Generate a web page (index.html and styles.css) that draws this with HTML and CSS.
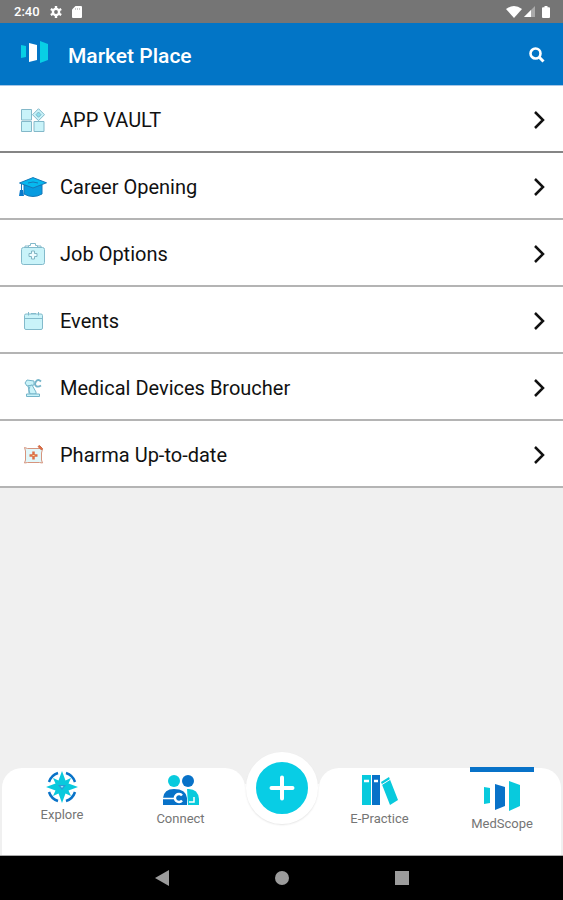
FILE: index.html
```html
<!DOCTYPE html>
<html lang="en">
<head>
<meta charset="utf-8">
<meta name="viewport" content="width=device-width, initial-scale=1">
<title>Market Place</title>
<link rel="stylesheet" href="styles.css">
</head>
<body>
<div class="status">
  <span class="time">2:40</span>
  <svg width="12" height="12" viewBox="0 0 12 12"><circle cx="6" cy="6" r="3.1" fill="none" stroke="#fff" stroke-width="2.4"/><path d="M6 0v12M.8 3l10.4 6M.8 9l10.4-6" stroke="#fff" stroke-width="2.4"/><circle cx="6" cy="6" r="1.9" fill="#757575"/></svg>
  <svg class="card" width="10" height="12" viewBox="0 0 10 12"><path d="M3.5 0H9q1 0 1 1v10q0 1-1 1H1q-1 0-1-1V3.6z" fill="#fff"/><path d="M3.5 2v2M5.5 2v2M7.5 2v2" stroke="#ccc"/></svg>
  <span class="signals">
    <svg width="16" height="12" viewBox="0 0 16 12"><path d="M0 3Q8-3 16 3L8 12z" fill="#fff"/></svg>
    <svg width="11" height="11" viewBox="0 0 11 11"><path d="M0 11L11 0v11z" fill="#aaa"/><path d="M0 11L7 4v7z" fill="#fff"/></svg>
    <svg class="battery" width="8" height="12" viewBox="0 0 8 12"><path d="M2.500 0h3v1.300H7q1 0 1 1V11q0 1-1 1H1q-1 0-1-1V2.300q0-1 1-1h1.500z" fill="#fff"/></svg>
  </span>
</div>
<header class="header">
  <svg width="27" height="22" viewBox="0 0 27 22"><path d="M0 4l5 1v11l-5 1z" fill="#08cfe5"/><path d="M8 2l8 2v15l-8 2z" fill="#fff"/><path d="M19 0l8 3v16l-8 3z" fill="#08cfe5"/></svg>
  <h1>Market Place</h1>
  <button class="search" aria-label="Search"><svg width="16" height="16" viewBox="0 0 16 16" fill="none" stroke="#fff"><circle cx="6.500" cy="6.500" r="5" stroke-width="2.600"/><path d="M10 10l4.500 4.500" stroke-width="3"/></svg></button>
</header>
<main>
  <ul class="list">
    <li><a href="#vault"><span class="icon"><svg width="24" height="24" viewBox="0 0 24 24" fill="#c9f3f9" stroke="#83b8c9"><path d="M.5 1.500h10v10.500H.5zM.5 13.500h10v10H.5zM13 13.500h10v10H13zM17.500.7l6 6-6 6-6-6z"/><path d="M17.500 4l2.500 2.700-2.500 2.600L15 6.700z" fill="#8de0ee"/></svg></span><span>APP VAULT</span><svg class="chevron" width="12" height="20" viewBox="0 0 12 20"><path d="M2 2l8 8-8 8"/></svg></a></li>
    <li><a href="#career"><span class="icon"><svg width="28" height="20" viewBox="0 0 28 20"><path d="M5 8v9q9 5 18 0V8z" fill="#079be0" stroke="#1678b8"/><path d="M.5 6L14 .6l13.500 5.200L14 11z" fill="#06b9ef" stroke="#1678b8"/><path d="M9 6q5-2 10 0M2.500 7v7" fill="none" stroke="#1678b8"/><path d="M1 13h3l1 6H0z" fill="#0879cb"/></svg></span><span>Career Opening</span><svg class="chevron" width="12" height="20" viewBox="0 0 12 20"><path d="M2 2l8 8-8 8"/></svg></a></li>
    <li><a href="#jobs"><span class="icon"><svg width="24" height="22" viewBox="0 0 24 22" fill="#c9f3f9" stroke="#83bacb"><rect x=".5" y="4.500" width="23" height="17" rx="2"/><path d="M7.500 4.500V2.500h2v-2h5v2h2v2M4 4.500V3h3M17 3h3v1.500" fill="none"/><path d="M10.500 8h3v2.500H16v3h-2.500V16h-3v-2.500H8v-3h2.500z" fill="#effcff" stroke="#82b5c4"/></svg></span><span>Job Options</span><svg class="chevron" width="12" height="20" viewBox="0 0 12 20"><path d="M2 2l8 8-8 8"/></svg></a></li>
    <li><a href="#events"><span class="icon"><svg width="19" height="18" viewBox="0 0 19 18" fill="#c9f3f9" stroke="#83bacb"><rect x=".5" y="2" width="18" height="15.500" rx="1.500"/><path d="M.5 6.500h18M4.500 0v3.500M7 1.500h5M14.500 0v3.500"/></svg></span><span>Events</span><svg class="chevron" width="12" height="20" viewBox="0 0 12 20"><path d="M2 2l8 8-8 8"/></svg></a></li>
    <li><a href="#devices"><span class="icon"><svg width="18" height="18" viewBox="0 0 18 18" fill="#c9f3f9" stroke="#74b4c9"><path d="M1 4l2-3 7 1v4L3 7z"/><path d="M17 2.500q-3-3-5 0-2 3 0 4.500 2 1.500 5-.5" fill="none" stroke-width="1.800"/><path d="M4 7l4-1 4 7v2H6z"/><path d="M2.500 15h13v2.500h-13z"/><path d="M6 7.500q-2 3-1 7" fill="none"/></svg></span><span>Medical Devices Broucher</span><svg class="chevron" width="12" height="20" viewBox="0 0 12 20"><path d="M2 2l8 8-8 8"/></svg></a></li>
    <li><a href="#pharma"><span class="icon"><svg width="19" height="19" viewBox="0 0 19 19" fill="#e1f7fa" stroke="#d6947d"><path d="M.5 2.500l3 1h13l2 .5-1 4v7l1 3-3-.5h-12l-3 .5 1-3V6z"/><path d="M14 1.500l1.500-1 3 3-1 1.500z" fill="#e06c42" stroke="#cd6b49"/><path d="M9.500 6.500v8M5.500 10.500h8" stroke="#dc7047" stroke-width="2.500"/><path d="M8.500 10.500h2" stroke="#ffe09b"/></svg></span><span>Pharma Up-to-date</span><svg class="chevron" width="12" height="20" viewBox="0 0 12 20"><path d="M2 2l8 8-8 8"/></svg></a></li>
  </ul>
</main>
<nav class="tabs">
  <div class="side">
    <a class="tab explore" href="#explore"><svg width="32" height="32" viewBox="0 0 32 32"><path d="M3 11A14 14 0 0 1 12 2M20 2A14 14 0 0 1 29 11M29 21A14 14 0 0 1 20 30M12 30A14 14 0 0 1 3 21" fill="none" stroke="#0872c8" stroke-width="2.500"/><path d="M16 0l3.500 9.500L25 7l-2.500 5.500L32 16l-9.500 3.500L25 25l-5.500-2.500L16 32l-3.500-9.500L7 25l2.500-5.500L0 16l9.500-3.500L7 7l5.500 2.500z" fill="#08c9dd"/><path d="M12 14h8l-4 5z" fill="#2a9ad6"/><path d="M14.500 15h3L16 17z" fill="#9fe4f2"/></svg><span>Explore</span></a>
    <a class="tab" href="#connect"><svg width="36" height="32" viewBox="0 0 36 32"><circle cx="11" cy="7" r="6" fill="#08cadd"/><circle cx="25" cy="7" r="6" fill="#0872c8"/><path d="M24 15q11-1 12 10v6H25z" fill="#08cadd"/><path d="M0 31v-7Q1 15 11 15q12 0 13 9v7z" fill="#0872c8"/><path d="M0 24.500h12M31 23v5h-5" fill="none" stroke="#fff" stroke-width="1.500"/><path d="M19 21.500a4 4 0 1 0 0 5" fill="none" stroke="#fff" stroke-width="2.500"/></svg><span>Connect</span></a>
  </div>
  <div class="middle"><button class="add" aria-label="Add"><svg width="26" height="26" viewBox="0 0 26 26"><path d="M13 2.500v21M2.500 13h21" stroke="#fff" stroke-width="4" stroke-linecap="round"/></svg></button></div>
  <div class="side">
    <a class="tab" href="#practice"><svg width="36" height="32" viewBox="0 0 36 32"><path d="M0 1h9v30H0zM19 8l8-5 9 23-8 5z" fill="#08cadd"/><path d="M10 1h8v30h-8z" fill="#0872c8"/><path d="M2 7h5M12 7h4" stroke="#fff" stroke-width="2.500"/><path d="M20 10.500l8-5" stroke="#fff" stroke-width="1"/></svg><span>E-Practice</span></a>
    <a class="tab active" href="#medscope"><svg width="36" height="30" viewBox="0 0 36 30"><path d="M0 6l6 1v15l-6 1z" fill="#08cadd"/><path d="M11 3l10 3v19l-10 4z" fill="#0872c8"/><path d="M25 0l11 4v21l-11 5z" fill="#08cadd"/></svg><span>MedScope</span></a>
  </div>
</nav>
<div class="system">
  <button aria-label="Back"><svg width="20" height="16" viewBox="0 0 20 16"><path d="M3 8L17 0v16z"/></svg></button>
  <button aria-label="Home"><svg width="20" height="16" viewBox="0 0 20 16"><circle cx="10" cy="8" r="7"/></svg></button>
  <button aria-label="Recent apps"><svg width="20" height="16" viewBox="0 0 20 16"><path d="M3 1h14v14H3z"/></svg></button>
</div>
</body>
</html>
```
FILE: styles.css
```css
* { box-sizing: border-box; }
body {
  margin: 0;
  min-height: 100vh;
  display: flex;
  flex-direction: column;
  background: #f0f0f0;
  font-family: Roboto, "Liberation Sans", sans-serif;
}
svg { display: block; flex: none; }
a { color: inherit; text-decoration: none; }
button { border: 0; padding: 0; background: none; cursor: pointer; }
.status {
  display: flex;
  align-items: center;
  height: 23px;
  padding: 0 13px 0 14px;
  background: #757575;
  color: #fff;
}
.time { font-size: 13px; font-weight: 500; margin-right: 10px; }
.card { margin-left: 10px; }
.signals { display: flex; align-items: center; gap: 2px; margin-left: auto; }
.battery { margin-left: 5px; }
.header {
  display: flex;
  align-items: center;
  height: 63px;
  padding: 2px 18px 0 21px;
  background: #0275c6;
  border-bottom: 1px solid #a6c6e6;
  color: #fff;
}
.header > svg { margin-bottom: 6px; }
.header h1 { margin: 0 0 0 20px; padding-top: 2px; font-size: 21px; line-height: 26px; font-weight: 500; }
.search { margin-left: auto; }
main { flex: 1; }
.list { margin: 0; padding: 0; list-style: none; }
.list a {
  display: flex;
  align-items: center;
  height: 67px;
  padding: 2px 18px 0;
  background: #fff;
  border-bottom: 2px solid #b4b4b4;
  color: #111;
  font-size: 20px;
}
.list li:first-child a { border-color: #858585; }
.icon { display: flex; justify-content: center; width: 30px; margin-right: 12px; }
.chevron { margin-left: auto; fill: none; stroke: #111; stroke-width: 2.5; }
.tabs {
  display: grid;
  grid-template-columns: 1fr 74px 1fr;
  height: 88px;
  padding: 0 2px;
  border-bottom: 1px solid #aaa;
}
.side {
  display: flex;
  justify-content: space-between;
  padding: 0 27px 0 29px;
  background: #fff;
  border-radius: 20px 20px 0 0;
}
.side:first-child { padding: 0 32px 0 28px; }
.middle {
  display: flex;
  justify-content: center;
  align-items: flex-start;
  background: linear-gradient(transparent 16px, #fff 16px);
}
.add {
  display: grid;
  place-items: center;
  flex: none;
  width: 72px;
  height: 72px;
  margin-top: -16px;
  border: 10px solid #fff;
  border-radius: 50%;
  background: #08cde5;
  box-shadow: 0 1px 2px #e4e4e4;
}
.tab {
  display: flex;
  flex-direction: column;
  align-items: center;
  gap: 5px;
  width: 64px;
  padding-top: 6px;
  color: #757575;
  font-size: 13px;
  line-height: 16px;
  white-space: nowrap;
}
.explore { padding-top: 3px; gap: 4px; }
.active { padding-top: 9px; border-top: 5px solid #0872c8; margin-top: -1px; }
.system {
  display: flex;
  justify-content: center;
  align-items: center;
  gap: 100px;
  height: 44px;
  background: #000;
}
.system svg { fill: #9c9c9c; }
```
